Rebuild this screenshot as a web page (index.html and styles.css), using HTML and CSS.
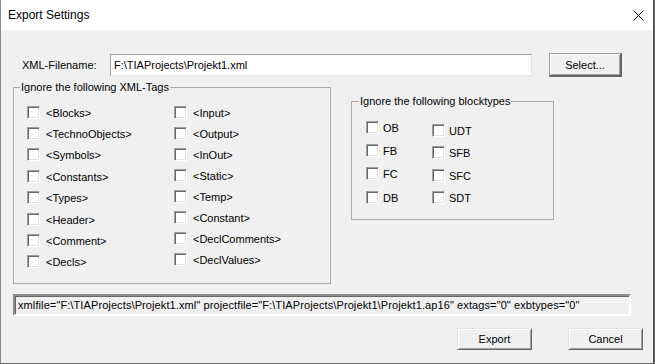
FILE: index.html
```html
<!DOCTYPE html>
<html lang="en">
<head>
    <meta charset="UTF-8">
    <title>Export Settings</title>
    <link rel="stylesheet" href="styles.css">
</head>
<body>
    <div class="window">
        <!-- Title bar -->
        <div class="titlebar">
            <span class="title">Export Settings</span>
            <svg class="close" width="11" height="11" viewBox="0 0 11 11">
                <path d="M0.5 0.5 L10.5 10.5 M10.5 0.5 L0.5 10.5" stroke="#000" stroke-width="1"/>
            </svg>
        </div>

        <div class="content">
            <!-- File row -->
            <div class="file-row">
                <label class="file-label">XML-Filename:</label>
                <input class="file-input" type="text" value="F:\TIAProjects\Projekt1.xml">
                <button class="btn btn-select">Select...</button>
            </div>

            <!-- Group boxes -->
            <div class="groups">
                <fieldset class="group group-tags">
                    <legend>Ignore the following XML-Tags</legend>
                    <div class="cols">
                        <div class="col col-a">
                            <label class="check"><span class="box"></span>&lt;Blocks&gt;</label>
                            <label class="check"><span class="box"></span>&lt;TechnoObjects&gt;</label>
                            <label class="check"><span class="box"></span>&lt;Symbols&gt;</label>
                            <label class="check"><span class="box"></span>&lt;Constants&gt;</label>
                            <label class="check"><span class="box"></span>&lt;Types&gt;</label>
                            <label class="check"><span class="box"></span>&lt;Header&gt;</label>
                            <label class="check"><span class="box"></span>&lt;Comment&gt;</label>
                            <label class="check"><span class="box"></span>&lt;Decls&gt;</label>
                        </div>
                        <div class="col col-b">
                            <label class="check"><span class="box"></span>&lt;Input&gt;</label>
                            <label class="check"><span class="box"></span>&lt;Output&gt;</label>
                            <label class="check"><span class="box"></span>&lt;InOut&gt;</label>
                            <label class="check"><span class="box"></span>&lt;Static&gt;</label>
                            <label class="check"><span class="box"></span>&lt;Temp&gt;</label>
                            <label class="check"><span class="box"></span>&lt;Constant&gt;</label>
                            <label class="check"><span class="box"></span>&lt;DeclComments&gt;</label>
                            <label class="check"><span class="box"></span>&lt;DeclValues&gt;</label>
                        </div>
                    </div>
                </fieldset>

                <fieldset class="group group-types">
                    <legend>Ignore the following blocktypes</legend>
                    <div class="cols">
                        <div class="col col-c">
                            <label class="check"><span class="box"></span>OB</label>
                            <label class="check"><span class="box"></span>FB</label>
                            <label class="check"><span class="box"></span>FC</label>
                            <label class="check"><span class="box"></span>DB</label>
                        </div>
                        <div class="col col-d">
                            <label class="check"><span class="box"></span>UDT</label>
                            <label class="check"><span class="box"></span>SFB</label>
                            <label class="check"><span class="box"></span>SFC</label>
                            <label class="check"><span class="box"></span>SDT</label>
                        </div>
                    </div>
                </fieldset>
            </div>

            <!-- Status line -->
            <div class="status">xmlfile="F:\TIAProjects\Projekt1.xml" projectfile="F:\TIAProjects\Projekt1\Projekt1.ap16" extags="0" exbtypes="0"</div>

            <!-- Buttons -->
            <div class="actions">
                <button class="btn">Export</button>
                <button class="btn">Cancel</button>
            </div>
        </div>
    </div>
</body>
</html>
```

FILE: styles.css
```css
/* General */
body {
    margin: 0;
    font-family: "Liberation Sans", Arial, sans-serif;
    font-size: 11px;
    color: #000;
    background: #f0f0f0;
}

.window {
    width: 655px;
    height: 364px;
    box-sizing: border-box;
    background: #f0f0f0;
    border-left: 1px solid #8a8a8a;
    border-right: 2px solid #5a5a5a;
    border-bottom: 1px solid #6a6a6a;
    overflow: hidden;
}

/* Title bar */
.titlebar {
    height: 30px;
    background: #fff;
    display: flex;
    align-items: center;
    justify-content: space-between;
    padding: 0 9px 0 7px;
}

.title {
    font-size: 12px;
}

.close {
    display: block;
}

/* Content */
.content {
    padding: 0 12px;
}

.file-row {
    display: flex;
    align-items: center;
    height: 24px;
    margin-top: 23px;
}

.file-label {
    width: 88px;
    padding-left: 9px;
}

.file-input {
    width: 422px;
    height: 22px;
    box-sizing: border-box;
    margin: 0;
    padding: 0 3px;
    font: inherit;
    background: #fff;
    border: 1px solid;
    border-color: #a0a0a0 #e3e3e3 #e3e3e3 #a0a0a0;
    outline: none;
}

.btn {
    width: 75px;
    height: 22px;
    box-sizing: border-box;
    margin: 0;
    padding: 0;
    font: inherit;
    color: #000;
    background: #f0f0f0;
    border: 1px solid;
    border-color: #e3e3e3 #696969 #696969 #e3e3e3;
    box-shadow: inset 1px 1px #fff, inset -1px -1px #a0a0a0;
}

.btn-select {
    width: 73px;
    height: 24px;
    margin-left: 17px;
    border-width: 1px 2px 2px 1px;
    border-color: #a0a0a0 #646464 #646464 #a0a0a0;
}

/* Group boxes */
.groups {
    display: flex;
    align-items: flex-start;
    gap: 20px;
    margin-top: 3px;
}

.group {
    margin: 0;
    padding: 0;
    min-width: 0;
    box-sizing: border-box;
    border: 1px solid #a9a9a9;
}

.group legend {
    padding: 0 1px;
    line-height: 14px;
}

.group-tags {
    width: 318px;
    height: 204px;
}

.group-tags legend {
    margin-left: 6px;
}

.group-types {
    width: 203px;
    height: 126px;
    margin-top: 14px;
}

.group-types legend {
    margin-left: 7px;
}

.cols {
    display: flex;
}

.col {
    display: flex;
    flex-direction: column;
}

.check {
    display: flex;
    align-items: center;
    white-space: nowrap;
}

.box {
    width: 13px;
    height: 13px;
    box-sizing: border-box;
    background: #fff;
    border: 1px solid;
    border-color: #a0a0a0 #fff #fff #a0a0a0;
    box-shadow: inset 1px 1px #696969, inset -1px -1px #e3e3e3;
    margin-top: -1px;
}

.col-a, .col-b {
    padding-top: 8px;
}

.col-a {
    width: 147px;
    padding-left: 13px;
}

.col-a .check {
    height: 21.4px;
}

.col-b .check {
    height: 21px;
}

.group-tags .box {
    margin-right: 6px;
}

.col-c {
    width: 66px;
    padding-left: 14px;
    padding-top: 8px;
}

.col-c .check {
    height: 23.3px;
}

.col-d {
    padding-top: 12px;
}

.col-d .check {
    height: 22.3px;
}

.group-types .box {
    margin-right: 4px;
}

/* Status line */
.status {
    width: 618px;
    height: 22px;
    box-sizing: border-box;
    margin-top: 10px;
    padding-left: 3px;
    line-height: 18px;
    letter-spacing: 0.1px;
    white-space: nowrap;
    border: 2px solid;
    border-color: #8c8c8c #fff #fff #8c8c8c;
    box-shadow: inset 1px 1px #696969;
}

/* Buttons */
.actions {
    display: flex;
    justify-content: flex-end;
    gap: 36px;
    margin-top: 12px;
    margin-right: -2px;
}
```
